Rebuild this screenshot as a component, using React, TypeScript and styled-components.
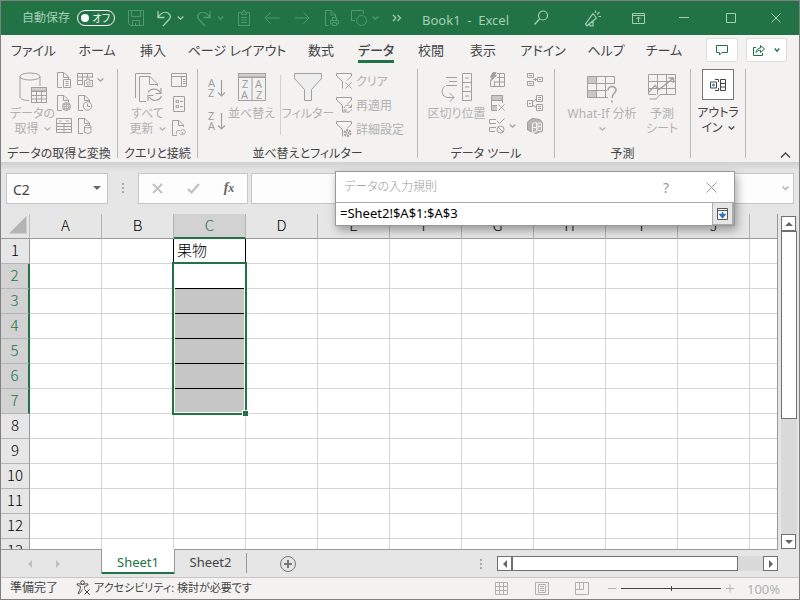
import React from "react";
import styled, { createGlobalStyle, css } from "styled-components";

const ui = `"Noto Sans", "Noto Sans CJK JP", sans-serif`;
const cellFont = `"Noto Sans CJK JP", "Noto Sans", sans-serif`;
const c = {
  green: "#217346",
  onGreen: "#a5cfb6",
  dimGreen: "#4f9a6e",
  ribbon: "#f3f2f1",
  panel: "#e6e6e6",
  text: "#444444",
  off: "#b1b1b1",
  offIcon: "#a0a0a0",
  line: "#999999",
  grid: "#d4d4d4",
};

const Global = createGlobalStyle`
  *, *::before, *::after { box-sizing: border-box; }
  body { margin: 0; font-family: ${ui}; font-size: 13px; color: ${c.text}; font-feature-settings: "palt"; }
  button, input { font: inherit; color: inherit; font-feature-settings: inherit; margin: 0; padding: 0; border: 0; background: none; border-radius: 0; outline: none; }
`;

const Window = styled.div`
  position: relative;
  display: flex;
  flex-direction: column;
  height: 100vh;
  border: 1px solid #808080;
  background: ${c.panel};
  overflow: hidden;
`;

/* ---------- drawings ---------- */

const Drawing = styled.svg`
  display: block;
  flex: none;
  overflow: visible;
  fill: none;
  stroke: currentColor;
`;

type IconProps = { w?: number; h?: number; children: React.ReactNode };
const Icon = ({ w = 16, h = 16, children }: IconProps) => (
  <Drawing width={w} height={h} viewBox={`0 0 ${w} ${h}`} aria-hidden="true">
    {children}
  </Drawing>
);

const Chevron = ({ w = 7 }: { w?: number }) => (
  <Icon w={w} h={4}>
    <path d={`M.7 .5 L${w / 2} 3.2 L${w - 0.7} .5`} strokeWidth="1.3" />
  </Icon>
);

const page = "M6 15.500H1.500V.5H8L12.500 5V7 M7.500 .5V5.500H12.500";

const SaveIcon = () => (
  <Icon>
    <path d="M.5 .5H15.500V15.500H2.500L.5 13.500ZM3.500 .5V6.500H12.500V.5M4.500 15.500V10.500H11.500V15.500M7.500 13V15" />
  </Icon>
);
const UndoIcon = () => (
  <Icon>
    <path d="M2 1V7.500H8.500M2 7.500C5 3 9 1.200 12 3C15.500 5.200 14.500 8 13 9.500L7 16" strokeWidth="1.3" />
  </Icon>
);
const RedoIcon = () => (
  <Icon>
    <path d="M14 1V7.500H7.500M14 7.500C11 3 7 1.200 4 3C.5 5.200 1.500 8 3 9.500L9 16" strokeWidth="1.3" />
  </Icon>
);
const ClipboardIcon = () => (
  <Icon>
    <path d="M5 2.500H2.500V15.500H13.500V2.500H11M5.500 4.500V2.500H7V.5H9V2.500H10.500V4.500ZM5 7.500H11M5 10H11M5 12.500H11" />
  </Icon>
);
const ArrowIcon = ({ right = false }: { right?: boolean }) => (
  <Icon>
    <path d={right ? "M.5 8H15M9.500 2.500L15 8L9.500 13.500" : "M15.500 8H1M6.500 2.500L1 8L6.500 13.500"} />
  </Icon>
);
const PrintPageIcon = () => (
  <Icon>
    <path d="M4.500 15.500H1.500V.5H7L11.500 5V7M7 .5V5H11.500M6.500 10.500H14.500V14H12.500M8.500 14H6.500V10.500M8.500 10V7.500H12.500V10M8.500 12.500H12.500V15.500H8.500Z" />
  </Icon>
);
const ShapesIcon = () => (
  <Icon>
    <path d="M4 10.500H.5V.5H12.500V4" />
    <circle cx="10.500" cy="10.500" r="5" />
  </Icon>
);
const MoreIcon = () => (
  <Icon w={10} h={8}>
    <path d="M1 1L4 4L1 7M5.500 1L8.500 4L5.500 7" strokeWidth="1.200" />
  </Icon>
);
const SearchIcon = () => (
  <Icon>
    <circle cx="10" cy="5.500" r="4.500" strokeWidth="1.200" />
    <path d="M6.500 9L1.500 14.500" strokeWidth="1.400" />
  </Icon>
);
const MegaphoneIcon = () => (
  <Icon w={17} h={17}>
    <path d="M9 3.500L12.500 8M9 3.500L1.500 14L3 15.800L12.500 8M6 13.500V16H9V11M11.500 3V.5M13 4.500L15.500 2M14.500 6.500H17" strokeWidth="1.200" />
  </Icon>
);
const RibbonDisplayIcon = () => (
  <Icon w={13} h={11}>
    <path d="M.5 .5H12.500V10.500H.5ZM.5 2.500H12.500M6.500 9V4M4.500 6L6.500 4L8.500 6" />
  </Icon>
);
const MinimizeIcon = () => (
  <Icon w={10} h={10}>
    <path d="M0 4.500H10" />
  </Icon>
);
const MaximizeIcon = () => (
  <Icon w={10} h={10}>
    <path d="M.5 .5H9.500V9.500H.5Z" />
  </Icon>
);
const CloseIcon = ({ s = 10 }: { s?: number }) => (
  <Icon w={s} h={s}>
    <path d={`M.5 .5L${s - 0.5} ${s - 0.5}M${s - 0.5} .5L.5 ${s - 0.5}`} />
  </Icon>
);
const CommentIcon = () => (
  <Icon w={12} h={11}>
    <path d="M.5 .5H11.500V7.500H6L3.500 10V7.500H.5Z" />
  </Icon>
);
const ShareIcon = () => (
  <Icon w={12} h={12}>
    <path d="M3 3.500H.5V11.500H9.500V9M3 8.500C3.500 5.500 5 4 7.500 4V1.500L11.500 5L7.500 8.500V6.200C5.500 6.200 4 7 3 8.500Z" />
  </Icon>
);
const DatabaseIcon = () => (
  <Icon w={28} h={32}>
    <ellipse cx="11" cy="4.500" rx="10" ry="3.500" />
    <path d="M1 4.500V25C1 27 5 28.500 10 28.500M21 4.500V14" />
    <rect x="12.500" y="15.500" width="15" height="15" fill={c.ribbon} />
    <path d="M12.500 15.500H27.500V19H12.500Z" fill="#d0d0d0" />
    <path d="M12.500 19.500H27.500M12.500 23.500H27.500M12.500 27H27.500M17.500 19V30.500M22.500 19V30.500" />
  </Icon>
);
const TextPageIcon = () => (
  <Icon>
    <path d={page} />
    <path d="M7.500 7.500H14.500V15.500H7.500ZM9.500 9.500H12.500M9.500 11.500H12.500M9.500 13.500H12.500" fill={c.ribbon} />
  </Icon>
);
const WebPageIcon = () => (
  <Icon>
    <path d={page} />
    <circle cx="10.500" cy="11.500" r="4" fill={c.ribbon} />
    <path d="M6.500 11.500H14.500M10.500 7.500V15.500M7 9.500H14M7 13.500H14M9 8Q7.500 11.500 9 15M12 8Q13.500 11.500 12 15" strokeWidth=".7" />
  </Icon>
);
const TableIcon = () => (
  <Icon>
    <path d="M.5 .5H15.500V14.500H.5ZM.5 5.500H15.500M.5 8.500H15.500M.5 11.500H15.500M8 5.500V14.500M3 3H5.500M10 3H13" />
  </Icon>
);
const CameraTableIcon = () => (
  <Icon>
    <path d="M6 12.500H.5V1.500H15.500V6M.5 5H15.500M.5 8.500H6M5.500 1.500V12.500M10.500 1.500V6" />
    <path d="M7.500 8.500H9.500V7H12.500V8.500H15.500V14.500H7.500Z" fill={c.ribbon} />
    <circle cx="11.500" cy="11.500" r="1.700" />
  </Icon>
);
const RecentPageIcon = () => (
  <Icon>
    <path d={page} />
    <circle cx="10.500" cy="11" r="4.200" fill={c.ribbon} />
    <path d="M10.500 8.500V11.500H13" />
  </Icon>
);
const DataPageIcon = () => (
  <Icon>
    <path d={page} />
    <path d="M7.500 8.500V14.500Q10.500 16.500 14 14.500V8.500Z" fill={c.ribbon} />
    <ellipse cx="10.700" cy="8.500" rx="3.200" ry="1.300" fill={c.ribbon} />
  </Icon>
);
const RefreshAllIcon = () => (
  <Icon w={28} h={32}>
    <path d="M1.500 26V1.500H17M12 29.500H5.500V4.500H16L23.500 12V14M15.500 4.500V12.500H23.500" />
    <path d="M14 20.500C16 16.500 23.500 15.500 26 20.500M27 16V21.500H21.500M27.500 24C25.500 29 18 30 15.500 25M14 29V23.500H19.500" strokeWidth="1.200" />
  </Icon>
);
const PaneIcon = () => (
  <Icon>
    <path d="M.5 1.500H15.500V14.500H.5ZM.5 4.500H15.500M10.500 4.500V14.500M12 7.500H14.500M12 9.500H14.500M12 11.500H14.500" />
  </Icon>
);
const PropertiesIcon = () => (
  <Icon>
    <path d="M2.500 .5H13.500V15.500H2.500ZM5 4.500H7.500V6.500H5ZM5 9.500H7.500V11.500H5ZM9 5.500H12M9 10.500H12" />
  </Icon>
);
const LinkPageIcon = () => (
  <Icon>
    <path d={page} />
    <path d="M6 14C4 11.500 7.500 9.500 9.500 11M8.500 13.500C10 15.500 12 14 11 12M10 10.500C12 8.500 15.500 10.500 14 13C13.500 14 12 14.500 11 14" />
  </Icon>
);
const SortIcon = ({ top, bottom }: { top: string; bottom: string }) => (
  <Icon w={18} h={18}>
    <g fill="currentColor" stroke="none" fontSize="11">
      <text x="0" y="8">{top}</text>
      <text x="0" y="18">{bottom}</text>
    </g>
    <path d="M13.500 1V17M10 13.500L13.500 17L17 13.500" strokeWidth="1.200" />
  </Icon>
);
const SortDialogIcon = () => (
  <Icon w={28} h={32}>
    <path d="M.5 1.500H27.500V5H.5Z" fill="#d0d0d0" />
    <path d="M.5 1.500H27.500V28.500H.5ZM.5 5.500H27.500M14 5.500V28.500" />
    <g fill="currentColor" stroke="none" fontSize="11">
      <text x="4" y="16">Z</text>
      <text x="3" y="27">A</text>
      <text x="17" y="16">A</text>
      <text x="18" y="27">Z</text>
    </g>
  </Icon>
);
const FilterIcon = () => (
  <Icon w={28} h={32}>
    <path d="M.5 1.500H27.500V6.500L17.500 17.500V28.500H10.500V17.500L.5 6.500Z" fill="#eeeeee" />
  </Icon>
);
const funnel = "M6.500 15.500V8.500L.5 3V.5H15.500V3L11 7.500";
const ClearFilterIcon = () => (
  <Icon>
    <path d={funnel} />
    <path d="M9.500 9.500L15.500 15.500M15.500 9.500L9.500 15.500" />
  </Icon>
);
const ReapplyIcon = () => (
  <Icon>
    <path d={funnel} />
    <path d="M8 11C9.500 7.500 13.500 7.500 15 10M15.500 7.500V10.500H12.500M15.500 12.500C14 16 10 16 8.500 13.500M8 16V13H11" />
  </Icon>
);
const AdvancedFilterIcon = () => (
  <Icon>
    <path d={funnel} />
    <circle cx="11.500" cy="12" r="3" strokeWidth="2" strokeDasharray="2 1.100" />
    <circle cx="11.500" cy="12" r="1.300" />
  </Icon>
);
const TextToColumnsIcon = () => (
  <Icon w={32} h={32}>
    <path d="M5 5.500H16M8 9.500H16M5 13.500H16M21.500 1.500H30.500V28.500H21.500ZM21.500 10.500H30.500M21.500 19.500H30.500M24 6H28M24 15H28M24 24H28" />
    <path d="M4 14C-1 18 1 25.500 7 25.500H13M8.500 21L13 25.500L8.500 30" />
  </Icon>
);
const FlashFillIcon = () => (
  <Icon>
    <path d="M8 1.500H15.500V14.500H1.500V9.500M8 5.500H15.500M5 10H15.500M10.500 1.500V14.500M5.500 9.500V14.500" />
    <path d="M4 .5H7L5.500 3.500H7.500L1.500 9L3.500 5H1.500Z" fill="currentColor" />
  </Icon>
);
const RemoveDuplicatesIcon = () => (
  <Icon>
    <path d="M2.500 .5H13.500V5.500H2.500Z" fill="#c8c8c8" />
    <path d="M2.500 10.500H8V15.500H2.500Z" fill="#c8c8c8" stroke="none" />
    <path d="M8 15.500H2.500V.5H13.500V8M2.500 5.500H13.500M2.500 10.500H8M9.500 9.500L15.500 15.500M15.500 9.500L9.500 15.500" />
  </Icon>
);
const ValidationIcon = () => (
  <Icon>
    <path d="M7 5.500H.5V1.500H7M7 9.500H.5V13.500H6M8 3L10.500 5.500L15.500 .5" />
    <circle cx="11.500" cy="11.500" r="3.500" />
    <path d="M9 9L14 14" />
  </Icon>
);
const ConsolidateIcon = () => (
  <Icon>
    <path d="M.5 1.500H6.500V5.500H.5ZM.5 9.500H6.500V13.500H.5ZM10.500 5.500H15.500V9.500H10.500ZM2 3.500H5M2 11.500H5M12 7.500H14M6 7.500H10M8 6L9.500 7.500L8 9" />
  </Icon>
);
const RelationshipsIcon = () => (
  <Icon>
    <path d="M.5 5.500H5.500V11.500H.5ZM9.500 .5H15.500V6.500H9.500ZM9.500 9.500H15.500V15.500H9.500ZM5.500 7L9.500 4M5.500 10L9.500 12.500M11 2.500H14M11 4.500H14M11 11.500H14M11 13.500H14M2 8.500H4" />
  </Icon>
);
const DataModelIcon = () => (
  <Icon>
    <path d="M.5 4L5 .5L13 1.500L15.500 4.500V13L8.500 15.500L.5 12Z" fill="#b5b5b5" />
    <path d="M5.500 5.500L9.500 4.500V13.500L5.500 14.500ZM11 5H14.500V12.500H11ZM11 8.500H14.500M5.500 9.500H9.500" stroke={c.ribbon} />
  </Icon>
);
const WhatIfIcon = () => (
  <Icon w={32} h={32}>
    <path d="M1.500 4.500H10V11.500H1.500ZM1.500 18.500H10V25.500H1.500Z" fill="#c8c8c8" stroke="none" />
    <path d="M22 25.500H1.500V4.500H28.500V12M1.500 11.500H28.500M1.500 18.500H21M10.500 4.500V25.500M19.500 4.500V25.500" />
    <path d="M22 18.500C22 13 30.500 13.500 30 18.500C29.500 21.500 26 21.500 26 26M26 28.500V30.500" strokeWidth="1.500" />
  </Icon>
);
const ForecastIcon = () => (
  <Icon w={28} h={32}>
    <path d="M8 22.500H.5V2.500H27.500V22.500H12L8 27H1.500M.5 9.500H27.500M.5 16.500H27.500M9.500 2.500V22.500M18.500 2.500V22.500" />
    <path d="M1 20L7 13.500L11 17.500L25 6.500M20.500 6H25.500V11" strokeWidth="1.400" />
  </Icon>
);
const OutlineIcon = () => (
  <Icon w={16} h={12}>
    <path d="M.5 3H6.500V9H.5ZM8.500 3V.5H5M8.500 9V11.500H5M10.500 .5H15.500V11.500H10.500ZM10.500 4.500H15.500M10.500 8H15.500" />
    <path d="M3.500 4.500V7.500M2 6H5" stroke="#2a8dd4" strokeWidth="1.300" />
  </Icon>
);
const AccessibilityIcon = () => (
  <Icon w={15} h={15}>
    <circle cx="6.500" cy="2.500" r="1.800" />
    <path d="M6.500 4.500C4 4 2.500 3.500 1 4C.5 5.500 3.500 6 4.500 6.500C4.500 9.500 3 11.500 2 13.500C3.500 14.500 5 11.500 6.500 9.500M6.500 4.500C9 4 10.500 3.500 12 4C12.500 5.500 9.500 6 8.500 6.500V8.500M8.500 9.500L13.500 14.500M13.500 9.500L8.500 14.500" />
  </Icon>
);

type Dir = "up" | "down" | "left" | "right";
const triangles: Record<Dir, string> = {
  up: "M0 6L4 2L8 6Z",
  down: "M0 2H8L4 6Z",
  left: "M6 0V8L2 4Z",
  right: "M2 0L6 4L2 8Z",
};
const Triangle = ({ dir }: { dir: Dir }) => (
  <Icon w={8} h={8}>
    <path d={triangles[dir]} fill="currentColor" stroke="none" />
  </Icon>
);

/* ---------- title bar ---------- */

const TitleBar = styled.header`
  display: flex;
  align-items: center;
  flex: none;
  height: 34px;
  background: ${c.green};
  color: ${c.onGreen};
`;
const AutoSave = styled.label`
  display: flex;
  align-items: center;
  gap: 7px;
  padding-left: 21px;
  font-size: 12px;
  line-height: 16px;
`;
const ToggleTrack = styled.span`
  display: flex;
  align-items: center;
  justify-content: space-between;
  width: 38px;
  height: 16px;
  padding: 0 4px 0 3px;
  border: 1px solid #fff;
  border-radius: 8px;
  color: #fff;
  font-size: 10px;
`;
const ToggleInput = styled.input`
  appearance: none;
  width: 8px;
  height: 8px;
  border-radius: 50%;
  background: #fff;
`;
const BarButton = styled.button<{ $w: number; $dim?: boolean }>`
  display: flex;
  align-items: center;
  justify-content: center;
  gap: 5px;
  flex: none;
  width: ${(p) => p.$w}px;
  height: 34px;
  color: ${(p) => (p.$dim ? c.dimGreen : c.onGreen)};
`;
const QuickAccess = styled.div`
  display: flex;
  padding-left: 7px;
`;
const DocTitle = styled.h1`
  flex: 1;
  margin: 0 0 0 12px;
  padding-top: 3px;
  font-size: 13px;
  font-weight: 400;
  line-height: 16px;
  white-space: pre;
`;
const WindowButtons = styled.div`
  display: flex;
`;

/* ---------- tabs ---------- */

const TabRow = styled.nav`
  display: flex;
  align-items: center;
  flex: none;
  height: 30px;
  background: ${c.ribbon};
`;
const Tab = styled.button<{ $w: number; $active?: boolean }>`
  display: flex;
  justify-content: center;
  flex: none;
  width: ${(p) => p.$w}px;
  padding-top: 2px;
  line-height: 20px;
  white-space: nowrap;
  font-weight: ${(p) => (p.$active ? 500 : 400)};
`;
const TabLabel = styled.span<{ $active?: boolean }>`
  border-bottom: 3px solid ${(p) => (p.$active ? c.green : "transparent")};
`;
const TabActions = styled.div`
  display: flex;
  gap: 8px;
  margin-left: auto;
  padding-right: 12px;
`;
const ActionButton = styled.button<{ $w: number }>`
  display: flex;
  align-items: center;
  justify-content: center;
  gap: 9px;
  width: ${(p) => p.$w}px;
  height: 24px;
  border: 1px solid #dddddd;
  border-radius: 2px;
  background: #fff;
  color: ${c.green};
`;

/* ---------- ribbon ---------- */

const Ribbon = styled.section`
  display: flex;
  flex: none;
  height: 97px;
  background: ${c.ribbon};
`;
const Group = styled.div<{ $w: number }>`
  display: flex;
  flex-direction: column;
  flex: none;
  width: ${(p) => p.$w}px;
  margin: 4px 0;
  border-right: 1px solid #b8b8b8;
`;
const GroupBody = styled.div<{ $pad: number }>`
  display: flex;
  flex: 1;
  padding-left: ${(p) => p.$pad}px;
`;
const GroupLabel = styled.div`
  height: 16px;
  margin-bottom: -4px;
  font-size: 12px;
  line-height: 16px;
  text-align: center;
  white-space: nowrap;
`;
const BigButton = styled.button<{ $w: number }>`
  display: flex;
  flex-direction: column;
  align-items: center;
  width: ${(p) => p.$w}px;
  padding-top: 3px;
  flex: none;
  font-size: 12px;
  line-height: 15px;
  white-space: nowrap;
  color: ${c.off};
  & > svg { color: ${c.offIcon}; margin-bottom: 2px; }
`;
const ChevLine = styled.span`
  display: flex;
  align-items: center;
  justify-content: center;
  gap: 5px;
  height: 15px;
`;
const SmallColumn = styled.div<{ $w: number; $row?: number; $top?: number }>`
  display: grid;
  grid-auto-rows: ${(p) => p.$row ?? 23}px;
  align-content: start;
  flex: none;
  width: ${(p) => p.$w}px;
  margin-top: ${(p) => p.$top ?? -1}px;
`;
const SmallButton = styled.button`
  display: flex;
  align-items: center;
  gap: 4px;
  color: ${c.offIcon};
  white-space: nowrap;
  font-size: 12px;
`;
const FaintLabel = styled.span`
  color: ${c.off};
`;
const InnerDivider = styled.div`
  flex: none;
  width: 1px;
  height: 60px;
  margin: 6px 5px 0;
  background: #d0d0d0;
`;
const InnerSpacer = styled.span`
  flex: none;
  width: 6px;
`;
const OutlineButton = styled(BigButton)`
  padding-top: 0;
  color: ${c.text};
  line-height: 15px;
`;
const OutlineFrame = styled.span`
  display: flex;
  align-items: center;
  justify-content: center;
  width: 32px;
  height: 31px;
  margin-bottom: 5px;
  border: 1px solid #777;
  background: #fff;
`;
const CollapseButton = styled.button`
  align-self: flex-end;
  margin-left: auto;
  padding: 0 8px 4px 0;
`;

/* ---------- formula bar ---------- */

const FormulaBar = styled.div`
  display: flex;
  align-items: center;
  flex: none;
  height: 52px;
  padding: 0 5px;
  background: linear-gradient(#cfcfcf, #e3e3e3 8px, ${c.panel} 12px);
`;
const Box = styled.div<{ $w?: number }>`
  display: flex;
  align-items: center;
  ${(p) => (p.$w ? css`flex: none; width: ${p.$w}px;` : css`flex: 1;`)}
  height: 31px;
  border: 1px solid #c6c6c6;
  background: #fdfdfd;
`;
const BoxInput = styled.input`
  flex: 1;
  min-width: 0;
  padding: 3px 0 0 6px;
  font-size: 14px;
`;
const BoxButton = styled.button<{ $w?: number; $dark?: boolean }>`
  display: flex;
  align-items: center;
  justify-content: center;
  ${(p) => (p.$w ? css`width: ${p.$w}px;` : css`flex: 1;`)}
  height: 100%;
  color: ${(p) => (p.$dark ? "#666666" : "#c0c0c0")};
`;
const Fx = styled.i`
  font-family: "Liberation Serif", serif;
  font-size: 14px;
  font-weight: 700;
  line-height: 16px;
`;
const FxSub = styled.span`
  font-size: 12px;
`;
const FormulaGap = styled.span`
  flex: none;
  width: 3px;
`;
const Grip = styled.span<{ $m: number }>`
  flex: none;
  width: 2px;
  height: 10px;
  margin: 0 ${(p) => p.$m}px;
  background: repeating-linear-gradient(#aaaaaa 0 2px, transparent 2px 4px);
`;

/* ---------- grid ---------- */

const Main = styled.main`
  display: flex;
  flex: 1;
  min-height: 0;
`;
const GridView = styled.div`
  flex: 1;
  min-width: 0;
  overflow: hidden;
  background: #fff;
  border-right: 1px solid ${c.line};
`;
const Sheet = styled.table`
  table-layout: fixed;
  width: 0;
  border-collapse: separate;
  border-spacing: 0;
  font-family: ${cellFont};
  font-size: 15px;
  line-height: 20px;
  color: #000;
  td, th { height: 25px; overflow: visible; font-weight: 300; }
  th { padding: 0 0 2px; }
`;
const ColSize = styled.col<{ $w: number }>`
  width: ${(p) => p.$w}px;
`;
const Corner = styled.th`
  background: ${c.panel};
  border-right: 1px solid #c0c0c0;
  border-bottom: 1px solid ${c.line};
  & > svg { margin-left: 8px; color: #b4b4b4; }
`;
const ColHead = styled.th<{ $on: boolean }>`
  background: ${(p) => (p.$on ? "#d2d2d2" : c.panel)};
  border-right: 1px solid #b4b4b4;
  border-bottom: ${(p) => (p.$on ? `2px solid ${c.green}` : `1px solid ${c.line}`)};
  color: ${(p) => (p.$on ? c.green : "#000")};
`;
const RowHead = styled.th<{ $on: boolean }>`
  background: ${(p) => (p.$on ? "#d2d2d2" : c.panel)};
  border-right: ${(p) => (p.$on ? `2px solid ${c.green}` : `1px solid ${c.line}`)};
  border-bottom: 1px solid #b4b4b4;
  color: ${(p) => (p.$on ? c.green : "#000")};
`;
const Cell = styled.td<{ $outlined?: boolean; $framed?: boolean }>`
  position: relative;
  border-right: 1px solid ${(p) => (p.$framed || p.$outlined ? "#000" : c.grid)};
  border-bottom: 1px solid ${c.grid};
  padding: ${(p) => (p.$outlined ? "0 0 2px 3px" : "0")};
`;
const Selection = styled.div<{ $rows: number }>`
  position: absolute;
  z-index: 1;
  left: -2px;
  top: -2px;
  width: 75px;
  height: ${(p) => p.$rows * 25 + 3}px;
  display: grid;
  grid-template-rows: repeat(${(p) => p.$rows - 1}, 25px) 1fr;
  padding: 0 1px;
  border: 2px solid ${c.green};
  background: #fff;
`;
const SelectedCell = styled.div<{ $first: boolean; $last: boolean }>`
  background: ${(p) => (p.$first ? "#fff" : "#c6c6c6")};
  border-bottom: ${(p) => (p.$last ? "1px solid #fff" : "1px solid #000")};
`;
const FillHandle = styled.span`
  position: absolute;
  right: -4px;
  bottom: -4px;
  width: 7px;
  height: 7px;
  border: 1px solid #fff;
  background: ${c.green};
`;

/* ---------- scroll bars ---------- */

const Gutter = styled.div`
  display: flex;
  flex: none;
  width: 21px;
  padding: 2px 2px 0 3px;
`;
const Scroll = styled.div<{ $vertical?: boolean }>`
  display: flex;
  flex: 1;
  flex-direction: ${(p) => (p.$vertical ? "column" : "row")};
  background: #dadada;
`;
const ScrollButton = styled.button`
  display: flex;
  align-items: center;
  justify-content: center;
  flex: none;
  width: 15px;
  height: 15px;
  border: 1px solid #707070;
  background: #fff;
  color: #666;
`;
const ScrollTrack = styled.div<{ $vertical?: boolean }>`
  display: flex;
  flex: 1;
  flex-direction: ${(p) => (p.$vertical ? "column" : "row")};
`;
const ScrollThumb = styled.div<{ $share: number }>`
  flex: 0 0 ${(p) => p.$share}%;
  border: 1px solid #707070;
  background: #fff;
`;

/* ---------- sheet bar and status bar ---------- */

const SheetBar = styled.div`
  display: flex;
  flex: none;
  height: 28px;
  padding-right: 21px;
`;
const SheetBarInner = styled.div`
  display: flex;
  flex: 1;
  border-top: 1px solid ${c.line};
`;
const SheetNav = styled.div`
  display: flex;
  align-items: center;
  gap: 20px;
  width: 100px;
  padding-left: 25px;
  color: #c0c0c0;
`;
const SheetTab = styled.button<{ $active?: boolean }>`
  height: 24px;
  font-size: 13px;
  line-height: 20px;
  ${(p) =>
    p.$active
      ? css`width: 74px; height: 25px; margin-top: -1px; background: #fff; color: ${c.green}; border: solid ${c.line}; border-width: 0 1px; box-shadow: inset 0 -2px ${c.green};`
      : css`width: 71px; color: ${c.text};`}
`;
const TabDivider = styled.span`
  width: 1px;
  height: 20px;
  margin-top: 3px;
  background: ${c.line};
`;
const AddSheet = styled.button`
  margin-left: 33px;
  color: #777;
`;
const HScrollArea = styled.div`
  display: flex;
  align-items: center;
  margin-left: auto;
`;
const HScrollFrame = styled.div`
  display: flex;
  width: 281px;
`;
const StatusBar = styled.footer`
  display: flex;
  align-items: center;
  flex: none;
  height: 22px;
  padding: 0 19px 0 9px;
  border-top: 1px solid #c6c6c6;
  background: ${c.ribbon};
  font-size: 12px;
  line-height: 18px;
`;
const StatusText = styled.span`
  padding-bottom: 2px;
`;
const StatusItem = styled.button`
  display: flex;
  align-items: center;
  gap: 3px;
  margin-left: 18px;
  padding-bottom: 2px;
  font-size: 11px;
`;
const ViewButtons = styled.div`
  display: flex;
  gap: 26px;
  margin: 0 19px 0 auto;
  color: #b0b0b0;
`;
const ZoomControls = styled.div`
  display: flex;
  align-items: center;
  gap: 5px;
  color: #b0b0b0;
`;
const ZoomRange = styled.input`
  appearance: none;
  width: 100px;
  height: 9px;
  background: linear-gradient(#444, #444) center / 100% 1px no-repeat;
  &::-webkit-slider-thumb { appearance: none; width: 1px; height: 5px; background: #444; }
`;
const ZoomValue = styled.output`
  margin-left: 8px;
  width: 33px;
  font-size: 13px;
  text-align: right;
`;

/* ---------- dialog ---------- */

const Dialog = styled.section`
  position: absolute;
  z-index: 5;
  left: 334px;
  top: 170px;
  width: 400px;
  border: 1px solid #999;
  background: #fff;
  box-shadow: 2px 4px 9px rgba(0, 0, 0, 0.35);
`;
const DialogTitle = styled.div`
  display: flex;
  align-items: center;
  height: 30px;
  padding: 0 17px 0 8px;
  color: #999;
`;
const DialogButton = styled.button`
  display: flex;
  margin-left: 37px;
  font-size: 14px;
`;
const DialogHeading = styled.h2`
  flex: 1;
  margin: 0;
  padding-bottom: 2px;
  font-size: 12px;
  font-weight: 300;
`;
const RangeRow = styled.div`
  display: flex;
  height: 23px;
  border-top: 1px solid #aaa;
`;
const RangeInput = styled.input`
  flex: 1;
  min-width: 0;
  padding: 0 0 3px 4px;
  font-size: 13px;
  color: #000;
`;
const RangeButton = styled.button`
  display: flex;
  align-items: center;
  justify-content: center;
  width: 22px;
  border: solid #aaa;
  border-width: 0 2px 1px 1px;
  background: #e6e6e6;
  color: #555;
`;

/* ---------- data ---------- */

const tabs: [string, number][] = [
  ["ファイル", 65],
  ["ホーム", 62],
  ["挿入", 50],
  ["ページ レイアウト", 118],
  ["数式", 50],
  ["データ", 60],
  ["校閲", 50],
  ["表示", 54],
  ["アドイン", 66],
  ["ヘルプ", 60],
  ["チーム", 56],
];
const columns = Array.from({ length: 26 }, (_, i) => String.fromCharCode(65 + i));
const rows = Array.from({ length: 50 }, (_, i) => i + 1);
const selectedRows = [2, 3, 4, 5, 6, 7];

const RibbonTabs = () => (
  <TabRow>
    {tabs.map(([name, w]) => (
      <Tab key={name} $w={w} $active={name === "データ"}>
        <TabLabel $active={name === "データ"}>{name}</TabLabel>
      </Tab>
    ))}
    <TabActions>
      <ActionButton $w={32} aria-label="コメント"><CommentIcon /></ActionButton>
      <ActionButton $w={41} aria-label="共有"><ShareIcon /><Chevron w={6} /></ActionButton>
    </TabActions>
  </TabRow>
);

const RibbonPanel = () => (
  <Ribbon>
    <Group $w={117}>
      <GroupBody $pad={8}>
        <BigButton $w={47}>
          <DatabaseIcon />
          <span>データの</span>
          <ChevLine>取得<Chevron /></ChevLine>
        </BigButton>
        <SmallColumn $w={21}>
          <SmallButton aria-label="テキストから"><TextPageIcon /></SmallButton>
          <SmallButton aria-label="Web から"><WebPageIcon /></SmallButton>
          <SmallButton aria-label="テーブルから"><TableIcon /></SmallButton>
        </SmallColumn>
        <SmallColumn $w={30}>
          <SmallButton aria-label="画像から"><CameraTableIcon /><Chevron /></SmallButton>
          <SmallButton aria-label="最近のソース"><RecentPageIcon /></SmallButton>
          <SmallButton aria-label="既存の接続"><DataPageIcon /></SmallButton>
        </SmallColumn>
      </GroupBody>
      <GroupLabel>データの取得と変換</GroupLabel>
    </Group>
    <Group $w={80}>
      <GroupBody $pad={6}>
        <BigButton $w={47}>
          <RefreshAllIcon />
          <span>すべて</span>
          <ChevLine>更新<Chevron /></ChevLine>
        </BigButton>
        <SmallColumn $w={18} $row={24}>
          <SmallButton aria-label="クエリ"><PaneIcon /></SmallButton>
          <SmallButton aria-label="プロパティ"><PropertiesIcon /></SmallButton>
          <SmallButton aria-label="リンクの編集"><LinkPageIcon /></SmallButton>
        </SmallColumn>
      </GroupBody>
      <GroupLabel>クエリと接続</GroupLabel>
    </Group>
    <Group $w={220}>
      <GroupBody $pad={10}>
        <SmallColumn $w={20} $row={33} $top={2}>
          <SmallButton aria-label="昇順"><SortIcon top="A" bottom="Z" /></SmallButton>
          <SmallButton aria-label="降順"><SortIcon top="Z" bottom="A" /></SmallButton>
        </SmallColumn>
        <BigButton $w={47}><SortDialogIcon /><span>並べ替え</span></BigButton>
        <InnerDivider />
        <BigButton $w={44}><FilterIcon /><span>フィルター</span></BigButton>
        <InnerSpacer />
        <SmallColumn $w={72} $row={24} $top={0}>
          <SmallButton><ClearFilterIcon /><FaintLabel>クリア</FaintLabel></SmallButton>
          <SmallButton><ReapplyIcon /><FaintLabel>再適用</FaintLabel></SmallButton>
          <SmallButton><AdvancedFilterIcon /><FaintLabel>詳細設定</FaintLabel></SmallButton>
        </SmallColumn>
      </GroupBody>
      <GroupLabel>並べ替えとフィルター</GroupLabel>
    </Group>
    <Group $w={137}>
      <GroupBody $pad={6}>
        <BigButton $w={65}><TextToColumnsIcon /><span>区切り位置</span></BigButton>
        <SmallColumn $w={38}>
          <SmallButton aria-label="フラッシュ フィル"><FlashFillIcon /></SmallButton>
          <SmallButton aria-label="重複の削除"><RemoveDuplicatesIcon /></SmallButton>
          <SmallButton aria-label="データの入力規則"><ValidationIcon /><Chevron /></SmallButton>
        </SmallColumn>
        <SmallColumn $w={20}>
          <SmallButton aria-label="統合"><ConsolidateIcon /></SmallButton>
          <SmallButton aria-label="リレーションシップ"><RelationshipsIcon /></SmallButton>
          <SmallButton aria-label="データ モデルの管理"><DataModelIcon /></SmallButton>
        </SmallColumn>
      </GroupBody>
      <GroupLabel>データ ツール</GroupLabel>
    </Group>
    <Group $w={136}>
      <GroupBody $pad={6}>
        <BigButton $w={82}>
          <WhatIfIcon />
          <span>What-If 分析</span>
          <ChevLine><Chevron /></ChevLine>
        </BigButton>
        <BigButton $w={38}>
          <ForecastIcon />
          <span>予測</span>
          <span>シート</span>
        </BigButton>
      </GroupBody>
      <GroupLabel>予測</GroupLabel>
    </Group>
    <Group $w={55}>
      <GroupBody $pad={6}>
        <OutlineButton $w={42}>
          <OutlineFrame><OutlineIcon /></OutlineFrame>
          <span>アウトラ</span>
          <ChevLine>イン<Chevron /></ChevLine>
        </OutlineButton>
      </GroupBody>
    </Group>
    <CollapseButton aria-label="リボンを折りたたむ">
      <Icon w={11} h={6}><path d="M1 5.500L5.500 1L10 5.500" strokeWidth="1.300" /></Icon>
    </CollapseButton>
  </Ribbon>
);

const Spreadsheet = () => (
  <GridView>
    <Sheet>
      <colgroup>
        <ColSize $w={29} />
        {columns.map((n) => <ColSize key={n} $w={72} />)}
      </colgroup>
      <thead>
        <tr>
          <Corner aria-label="すべて選択">
            <Icon w={18} h={18}><path d="M17.500 0V17.500H0Z" fill="currentColor" stroke="none" /></Icon>
          </Corner>
          {columns.map((n) => <ColHead key={n} $on={n === "C"}>{n}</ColHead>)}
        </tr>
      </thead>
      <tbody>
        {rows.map((r) => (
          <tr key={r}>
            <RowHead $on={selectedRows.includes(r)}>{r}</RowHead>
            {columns.map((n) => (
              <Cell key={n} $outlined={n === "C" && r === 1} $framed={n === "B" && r === 1}>
                {n === "C" && r === 1 && "果物"}
                {n === "C" && r === 2 && (
                  <Selection $rows={selectedRows.length}>
                    {selectedRows.map((s, i) => (
                      <SelectedCell key={s} $first={i === 0} $last={i === selectedRows.length - 1} />
                    ))}
                    <FillHandle />
                  </Selection>
                )}
              </Cell>
            ))}
          </tr>
        ))}
      </tbody>
    </Sheet>
  </GridView>
);

export default function App() {
  return (
    <>
      <Global />
      <Window>
        <TitleBar>
          <AutoSave>
            自動保存
            <ToggleTrack><ToggleInput type="checkbox" />オフ</ToggleTrack>
          </AutoSave>
          <QuickAccess>
            <BarButton $w={28} $dim aria-label="上書き保存"><SaveIcon /></BarButton>
            <BarButton $w={40} aria-label="元に戻す"><UndoIcon /><Chevron /></BarButton>
            <BarButton $w={40} $dim aria-label="やり直し"><RedoIcon /><Chevron /></BarButton>
            <BarButton $w={28} $dim aria-label="貼り付け"><ClipboardIcon /></BarButton>
            <BarButton $w={28} $dim aria-label="戻る"><ArrowIcon /></BarButton>
            <BarButton $w={31} $dim aria-label="進む"><ArrowIcon right /></BarButton>
            <BarButton $w={29} $dim aria-label="印刷プレビュー"><PrintPageIcon /></BarButton>
            <BarButton $w={38} $dim aria-label="図形"><ShapesIcon /><Chevron /></BarButton>
            <BarButton $w={26} aria-label="その他"><MoreIcon /></BarButton>
          </QuickAccess>
          <DocTitle>{"Book1  -  Excel"}</DocTitle>
          <WindowButtons>
            <BarButton $w={52} aria-label="検索"><SearchIcon /></BarButton>
            <BarButton $w={50} aria-label="新機能"><MegaphoneIcon /></BarButton>
            <BarButton $w={42} aria-label="リボンの表示オプション"><RibbonDisplayIcon /></BarButton>
            <BarButton $w={50} aria-label="最小化"><MinimizeIcon /></BarButton>
            <BarButton $w={44} aria-label="最大化"><MaximizeIcon /></BarButton>
            <BarButton $w={46} aria-label="閉じる"><CloseIcon /></BarButton>
          </WindowButtons>
        </TitleBar>

        <RibbonTabs />
        <RibbonPanel />

        <FormulaBar>
          <Box $w={102}>
            <BoxInput aria-label="名前ボックス" defaultValue="C2" />
            <BoxButton $w={20} $dark aria-label="名前の一覧"><Triangle dir="down" /></BoxButton>
          </Box>
          <Grip $m={14} />
          <Box $w={110}>
            <BoxButton aria-label="キャンセル">
              <Icon w={11} h={11}><path d="M1 1L10 10M10 1L1 10" strokeWidth="1.800" /></Icon>
            </BoxButton>
            <BoxButton aria-label="入力">
              <Icon w={13} h={11}><path d="M1 6L4.500 9.500L12 1" strokeWidth="2.200" /></Icon>
            </BoxButton>
            <BoxButton $dark aria-label="関数の挿入"><Fx>f<FxSub>x</FxSub></Fx></BoxButton>
          </Box>
          <FormulaGap />
          <Box>
            <BoxInput aria-label="数式バー" />
            <BoxButton $w={16} aria-label="数式バーの展開">
              <Icon w={7} h={5}><path d="M.5 .5L3.500 3.500L6.500 .5" strokeWidth="1.800" /></Icon>
            </BoxButton>
          </Box>
        </FormulaBar>

        <Main>
          <Spreadsheet />
          <Gutter>
            <Scroll $vertical>
              <ScrollButton aria-label="上へ"><Triangle dir="up" /></ScrollButton>
              <ScrollTrack $vertical><ScrollThumb $share={62} /></ScrollTrack>
              <ScrollButton aria-label="下へ"><Triangle dir="down" /></ScrollButton>
            </Scroll>
          </Gutter>
        </Main>

        <SheetBar>
          <SheetBarInner>
            <SheetNav><Triangle dir="left" /><Triangle dir="right" /></SheetNav>
            <SheetTab $active>Sheet1</SheetTab>
            <SheetTab>Sheet2</SheetTab>
            <TabDivider />
            <AddSheet aria-label="新しいシート">
              <Icon>
                <circle cx="8" cy="8" r="7.500" />
                <path d="M8 4V12M4 8H12" strokeWidth="2" />
              </Icon>
            </AddSheet>
            <HScrollArea>
              <Grip $m={15} />
              <HScrollFrame>
                <Scroll>
                  <ScrollButton aria-label="左へ"><Triangle dir="left" /></ScrollButton>
                  <ScrollTrack><ScrollThumb $share={90} /></ScrollTrack>
                  <ScrollButton aria-label="右へ"><Triangle dir="right" /></ScrollButton>
                </Scroll>
              </HScrollFrame>
            </HScrollArea>
          </SheetBarInner>
        </SheetBar>

        <StatusBar>
          <StatusText>準備完了</StatusText>
          <StatusItem><AccessibilityIcon />アクセシビリティ: 検討が必要です</StatusItem>
          <ViewButtons>
            <button aria-label="標準">
              <Icon w={14} h={13}><path d="M.5 .5H12.500V12.500H.5ZM.5 4.500H12.500M.5 8.500H12.500M4.500 .5V12.500M8.500 .5V12.500" /></Icon>
            </button>
            <button aria-label="ページ レイアウト">
              <Icon w={14} h={13}><path d="M.5 .5H13.500V12.500H.5ZM3.500 2.500H10.500V10.500H3.500ZM5 4.500H9M5 6.500H9M5 8.500H9" /></Icon>
            </button>
            <button aria-label="改ページ プレビュー">
              <Icon w={14} h={13}><path d="M.5 .5H13.500V12.500H.5ZM4.500 .5V7.500M8.500 .5V7.500M.5 7.500H8.500" /></Icon>
            </button>
          </ViewButtons>
          <ZoomControls>
            <button aria-label="縮小"><Icon w={8} h={9}><path d="M0 4.500H8" /></Icon></button>
            <ZoomRange type="range" min="0" max="100" defaultValue="50" aria-label="ズーム" />
            <button aria-label="拡大"><Icon w={8} h={9}><path d="M0 4.500H8M4 .5V8.500" /></Icon></button>
            <ZoomValue>100%</ZoomValue>
          </ZoomControls>
        </StatusBar>

        <Dialog role="dialog" aria-label="データの入力規則">
          <DialogTitle>
            <DialogHeading>データの入力規則</DialogHeading>
            <DialogButton aria-label="ヘルプ">?</DialogButton>
            <DialogButton aria-label="閉じる"><CloseIcon s={11} /></DialogButton>
          </DialogTitle>
          <RangeRow>
            <RangeInput aria-label="元の値" defaultValue="=Sheet2!$A$1:$A$3" />
            <RangeButton aria-label="ダイアログの展開">
              <Icon w={11} h={12}>
                <path d="M.5 .5H10.500V11.500H.5ZM.5 2.500H10.500" fill="#fff" />
                <path d="M5.500 4V9M3 6.500L5.500 9.500L8 6.500Z" stroke="#2f74b8" strokeWidth="1.500" fill="#2f74b8" />
              </Icon>
            </RangeButton>
          </RangeRow>
        </Dialog>
      </Window>
    </>
  );
}
